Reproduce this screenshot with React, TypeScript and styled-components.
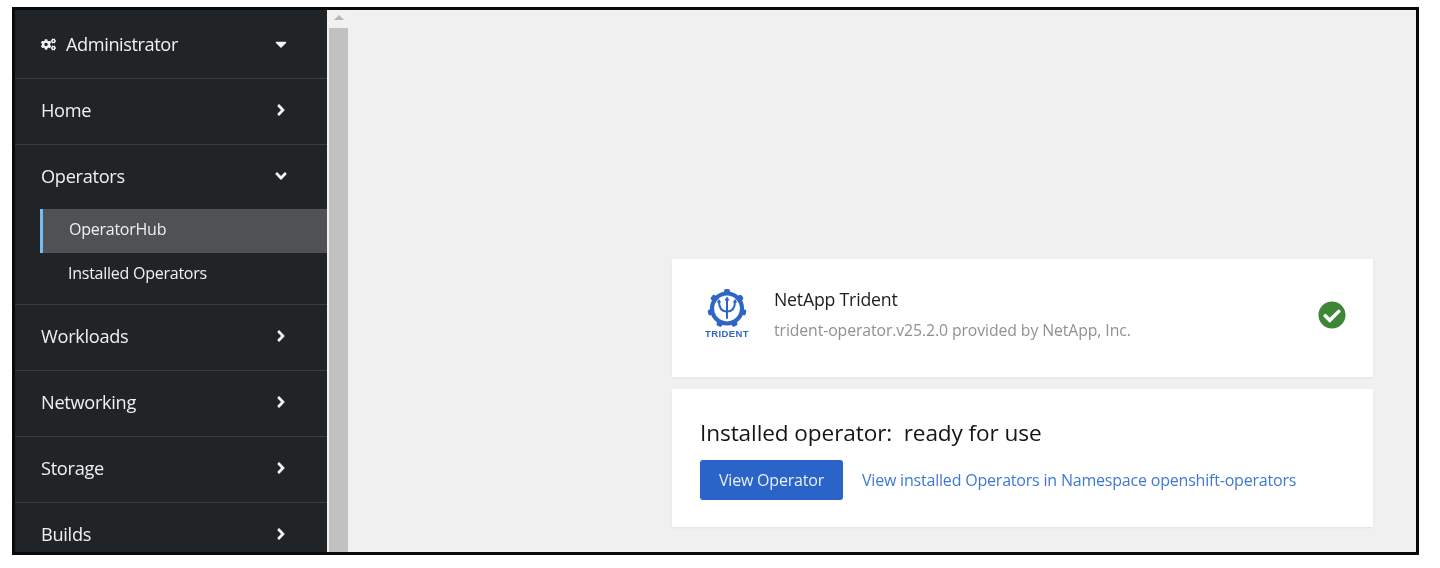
import styled, { createGlobalStyle } from 'styled-components';
import { FaAngleDown, FaAngleRight, FaCaretDown, FaCheckCircle, FaCogs } from 'react-icons/fa';

const GlobalStyle = createGlobalStyle`
  html, body {
    margin: 0;
    padding: 0;
    background: #fff;
    font-family: "Open Sans", "Liberation Sans", sans-serif;
  }
`;

const Frame = styled.div`
  box-sizing: border-box;
  display: flex;
  width: 1407px;
  height: 548px;
  margin: 7px 0 0 12px;
  border: 3px solid #0a0a0a;
  overflow: hidden;
  background: #f0f0f0;
  filter: blur(0.4px);
`;

const Sidebar = styled.nav`
  flex: 0 0 312px;
  background: #212427;
  color: #f0f0f0;
  overflow: hidden;
`;

const NavRow = styled.div<{ $top?: boolean }>`
  box-sizing: border-box;
  display: flex;
  align-items: center;
  justify-content: space-between;
  height: ${(p) => (p.$top ? '69px' : '66px')};
  padding: ${(p) => (p.$top ? '0 37px 0 26px' : '0 37px 4px 26px')};
  border-bottom: 1.5px solid #3a3c3f;
  font-size: 18.2px;
  letter-spacing: -0.3px;
  svg {
    font-size: 18px;
    color: #f4f4f4;
  }
`;

const NavGroup = styled.div`
  box-sizing: border-box;
  height: 160px;
  border-bottom: 1.5px solid #3a3c3f;
`;

const GroupHeader = styled(NavRow)`
  height: 64px;
  padding-top: 1px;
  border-bottom: none;
`;

const SubItem = styled.div<{ $active?: boolean }>`
  box-sizing: border-box;
  display: flex;
  align-items: center;
  height: 44px;
  margin-left: 25px;
  padding: 0 0 5px ${(p) => (p.$active ? '26px' : '28px')};
  font-size: 16px;
  font-weight: 500;
  letter-spacing: -0.25px;
  background: ${(p) => (p.$active ? '#4f5154' : 'transparent')};
  border-left: ${(p) => (p.$active ? '3px solid #73bcf7' : 'none')};
`;

const RoleLabel = styled.span`
  display: flex;
  align-items: center;
  gap: 10px;
  letter-spacing: -0.42px;
  svg {
    font-size: 15px;
  }
`;

const ScrollTrack = styled.div`
  flex: 0 0 22px;
  display: flex;
  flex-direction: column;
  align-items: flex-end;
  background: #f1f1f1;
  padding-right: 1px;
  box-sizing: border-box;
`;

const ScrollArrow = styled.div`
  flex: 0 0 18px;
  width: 19px;
  display: flex;
  justify-content: center;
  padding-top: 5px;
  box-sizing: border-box;
  &::before {
    content: '';
    border-left: 5px solid transparent;
    border-right: 5px solid transparent;
    border-bottom: 5px solid #b5b5b5;
    height: 0;
  }
`;

const ScrollThumb = styled.div`
  flex: 1;
  width: 19px;
  background: #c1c1c1;
`;

const Main = styled.main`
  flex: 1;
  display: flex;
  flex-direction: column;
  justify-content: flex-end;
  gap: 12px;
  padding: 0 43px 25px 323px;
  background: #f0f0f0;
`;

const Card = styled.section`
  background: #fff;
  box-shadow: 0 1px 2px rgba(0, 0, 0, 0.06);
`;

const OperatorCard = styled(Card)`
  display: flex;
  align-items: center;
  height: 118px;
  padding: 0 27px 0 31px;
  box-sizing: border-box;
`;

const LogoBox = styled.div`
  flex: 0 0 48px;
  display: flex;
  flex-direction: column;
  align-items: center;
  margin: 0 23px 9px 0;
`;

const LogoWord = styled.span`
  font-family: "Liberation Sans", sans-serif;
  font-size: 9.5px;
  line-height: 9px;
  font-weight: 700;
  letter-spacing: 0.4px;
  color: #2f66c4;
  margin-top: 1px;
`;

const OperatorInfo = styled.div`
  flex: 1;
  display: flex;
  flex-direction: column;
  gap: 10px;
  margin-top: -8px;
`;

const OperatorName = styled.div`
  font-size: 17.7px;
  line-height: 22px;
  letter-spacing: -0.2px;
  color: #1c1c1c;
`;

const OperatorMeta = styled.div`
  font-size: 15.8px;
  line-height: 20px;
  letter-spacing: -0.1px;
  color: #8f9092;
`;

const StatusIcon = styled(FaCheckCircle)`
  font-size: 28px;
  color: #3e8635;
  margin-bottom: 6px;
`;

const ReadyCard = styled(Card)`
  height: 138px;
  padding: 29px 28px 0;
  box-sizing: border-box;
`;

const ReadyTitle = styled.h2`
  margin: 0 0 12px;
  font-size: 22.6px;
  line-height: 30px;
  font-weight: 500;
  letter-spacing: -0.1px;
  color: #151515;
  white-space: pre;
`;

const ActionRow = styled.div`
  display: flex;
  align-items: center;
  gap: 19px;
`;

const PrimaryButton = styled.button`
  width: 143px;
  height: 40px;
  padding: 0 0 1px;
  border: none;
  border-radius: 3px;
  background: #2b64c8;
  color: #e8eefa;
  font-family: inherit;
  font-size: 16px;
  letter-spacing: -0.2px;
`;

const TextLink = styled.a`
  font-size: 16px;
  letter-spacing: -0.2px;
  color: #3f78d6;
`;

const NAV_AFTER = ['Workloads', 'Networking', 'Storage', 'Builds'];

const TEETH = [0, 51.4, 102.8, 154.2, 205.7, 257.1, 308.5];

const TridentMark = () => (
  <svg width="44" height="39" viewBox="0 0 44 39" aria-hidden="true">
    <g fill="#2f66c4">
      {TEETH.map((deg) => (
        <rect key={deg} x="19" y="0" width="6" height="5" rx="2" transform={`rotate(${deg} 22 19.5)`} />
      ))}
    </g>
    <circle cx="22" cy="19.5" r="15" fill="none" stroke="#2f66c4" strokeWidth="4.2" />
    <g fill="none" stroke="#2f66c4" strokeWidth="2" strokeLinecap="round">
      <path d="M22 10v19" />
      <path d="M14 12.5c0 6.5 2.5 10 8 10s8-3.5 8-10" />
    </g>
    <path d="M22 7.5l2.6 4h-5.2zM14 10l2.3 3.4h-4.6zM30 10l2.3 3.4h-4.6z" fill="#2f66c4" />
  </svg>
);

export default function App() {
  return (
    <>
      <GlobalStyle />
      <Frame>
        <Sidebar>
          <NavRow $top>
            <RoleLabel>
              <FaCogs />
              Administrator
            </RoleLabel>
            <FaCaretDown />
          </NavRow>
          <NavRow>
            Home
            <FaAngleRight />
          </NavRow>
          <NavGroup>
            <GroupHeader>
              Operators
              <FaAngleDown />
            </GroupHeader>
            <SubItem $active>OperatorHub</SubItem>
            <SubItem>Installed Operators</SubItem>
          </NavGroup>
          {NAV_AFTER.map((label) => (
            <NavRow key={label}>
              {label}
              <FaAngleRight />
            </NavRow>
          ))}
        </Sidebar>
        <ScrollTrack>
          <ScrollArrow />
          <ScrollThumb />
        </ScrollTrack>
        <Main>
          <OperatorCard>
            <LogoBox>
              <TridentMark />
              <LogoWord>TRIDENT</LogoWord>
            </LogoBox>
            <OperatorInfo>
              <OperatorName>NetApp Trident</OperatorName>
              <OperatorMeta>trident-operator.v25.2.0 provided by NetApp, Inc.</OperatorMeta>
            </OperatorInfo>
            <StatusIcon />
          </OperatorCard>
          <ReadyCard>
            <ReadyTitle>Installed operator:  ready for use</ReadyTitle>
            <ActionRow>
              <PrimaryButton>View Operator</PrimaryButton>
              <TextLink>View installed Operators in Namespace openshift-operators</TextLink>
            </ActionRow>
          </ReadyCard>
        </Main>
      </Frame>
    </>
  );
}
